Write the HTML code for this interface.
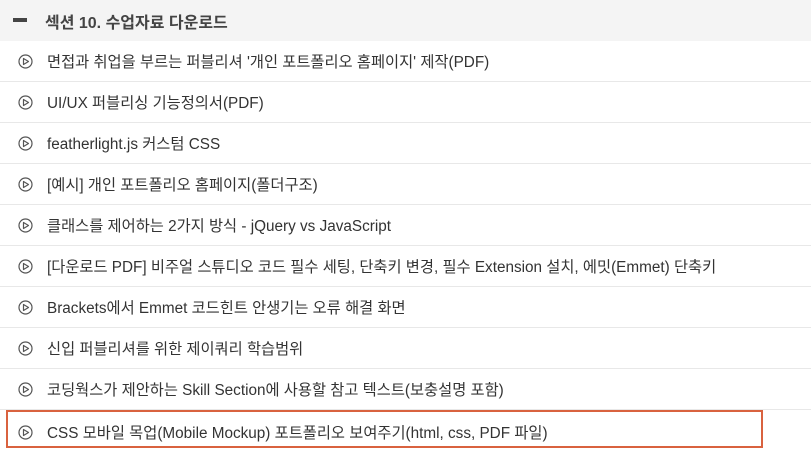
<!DOCTYPE html>
<html><head><meta charset="utf-8"><style>
html,body{margin:0;padding:0;background:#fff;}
body{width:811px;height:450px;overflow:hidden;font-family:"Liberation Sans","Noto Sans CJK KR",sans-serif;color:#333;}
.hd{height:41px;background:#f4f4f4;display:flex;align-items:center;font-weight:bold;font-size:16px;color:#444;}
.hd .dash{width:14px;height:4px;background:#444;margin-left:13px;margin-right:18px;margin-top:-2px;}
.row{height:40px;border-bottom:1px solid #e8e8e8;display:flex;align-items:center;font-size:15.3px;color:#333;position:relative;}
.row svg{position:absolute;left:18px;top:13px;}
.row span{margin-left:47px;white-space:nowrap;}
.last{position:absolute;left:6px;top:410px;width:753px;height:34px;border:2px solid #d9623f;}
</style></head><body>
<div class="hd"><div class="dash"></div>섹션 10. 수업자료 다운로드</div>
<div class="row"><svg width="15" height="15" viewBox="0 0 15 15"><circle cx="7.5" cy="7.5" r="6.5" fill="none" stroke="#555" stroke-width="1.2"/><path d="M5.5 4.5 L10.5 7.5 L5.5 10.5 Z" fill="none" stroke="#555" stroke-width="1.2" stroke-linejoin="round"/></svg><span>면접과 취업을 부르는 퍼블리셔 '개인 포트폴리오 홈페이지' 제작(PDF)</span></div>
<div class="row"><svg width="15" height="15" viewBox="0 0 15 15"><circle cx="7.5" cy="7.5" r="6.5" fill="none" stroke="#555" stroke-width="1.2"/><path d="M5.5 4.5 L10.5 7.5 L5.5 10.5 Z" fill="none" stroke="#555" stroke-width="1.2" stroke-linejoin="round"/></svg><span>UI/UX 퍼블리싱 기능정의서(PDF)</span></div>
<div class="row"><svg width="15" height="15" viewBox="0 0 15 15"><circle cx="7.5" cy="7.5" r="6.5" fill="none" stroke="#555" stroke-width="1.2"/><path d="M5.5 4.5 L10.5 7.5 L5.5 10.5 Z" fill="none" stroke="#555" stroke-width="1.2" stroke-linejoin="round"/></svg><span>featherlight.js 커스텀 CSS</span></div>
<div class="row"><svg width="15" height="15" viewBox="0 0 15 15"><circle cx="7.5" cy="7.5" r="6.5" fill="none" stroke="#555" stroke-width="1.2"/><path d="M5.5 4.5 L10.5 7.5 L5.5 10.5 Z" fill="none" stroke="#555" stroke-width="1.2" stroke-linejoin="round"/></svg><span>[예시] 개인 포트폴리오 홈페이지(폴더구조)</span></div>
<div class="row"><svg width="15" height="15" viewBox="0 0 15 15"><circle cx="7.5" cy="7.5" r="6.5" fill="none" stroke="#555" stroke-width="1.2"/><path d="M5.5 4.5 L10.5 7.5 L5.5 10.5 Z" fill="none" stroke="#555" stroke-width="1.2" stroke-linejoin="round"/></svg><span>클래스를 제어하는 2가지 방식 - jQuery vs JavaScript</span></div>
<div class="row"><svg width="15" height="15" viewBox="0 0 15 15"><circle cx="7.5" cy="7.5" r="6.5" fill="none" stroke="#555" stroke-width="1.2"/><path d="M5.5 4.5 L10.5 7.5 L5.5 10.5 Z" fill="none" stroke="#555" stroke-width="1.2" stroke-linejoin="round"/></svg><span>[다운로드 PDF] 비주얼 스튜디오 코드 필수 세팅, 단축키 변경, 필수 Extension 설치, 에밋(Emmet) 단축키</span></div>
<div class="row"><svg width="15" height="15" viewBox="0 0 15 15"><circle cx="7.5" cy="7.5" r="6.5" fill="none" stroke="#555" stroke-width="1.2"/><path d="M5.5 4.5 L10.5 7.5 L5.5 10.5 Z" fill="none" stroke="#555" stroke-width="1.2" stroke-linejoin="round"/></svg><span>Brackets에서 Emmet 코드힌트 안생기는 오류 해결 화면</span></div>
<div class="row"><svg width="15" height="15" viewBox="0 0 15 15"><circle cx="7.5" cy="7.5" r="6.5" fill="none" stroke="#555" stroke-width="1.2"/><path d="M5.5 4.5 L10.5 7.5 L5.5 10.5 Z" fill="none" stroke="#555" stroke-width="1.2" stroke-linejoin="round"/></svg><span>신입 퍼블리셔를 위한 제이쿼리 학습범위</span></div>
<div class="row"><svg width="15" height="15" viewBox="0 0 15 15"><circle cx="7.5" cy="7.5" r="6.5" fill="none" stroke="#555" stroke-width="1.2"/><path d="M5.5 4.5 L10.5 7.5 L5.5 10.5 Z" fill="none" stroke="#555" stroke-width="1.2" stroke-linejoin="round"/></svg><span>코딩웍스가 제안하는 Skill Section에 사용할 참고 텍스트(보충설명 포함)</span></div>
<div class="row" style="border-bottom:none"><svg width="15" height="15" viewBox="0 0 15 15" style="top:15px"><circle cx="7.5" cy="7.5" r="6.5" fill="none" stroke="#555" stroke-width="1.2"/><path d="M5.5 4.5 L10.5 7.5 L5.5 10.5 Z" fill="none" stroke="#555" stroke-width="1.2" stroke-linejoin="round"/></svg><span style="margin-top:4px">CSS 모바일 목업(Mobile Mockup) 포트폴리오 보여주기(html, css, PDF 파일)</span></div>
<div class="last"></div>
</body></html>
